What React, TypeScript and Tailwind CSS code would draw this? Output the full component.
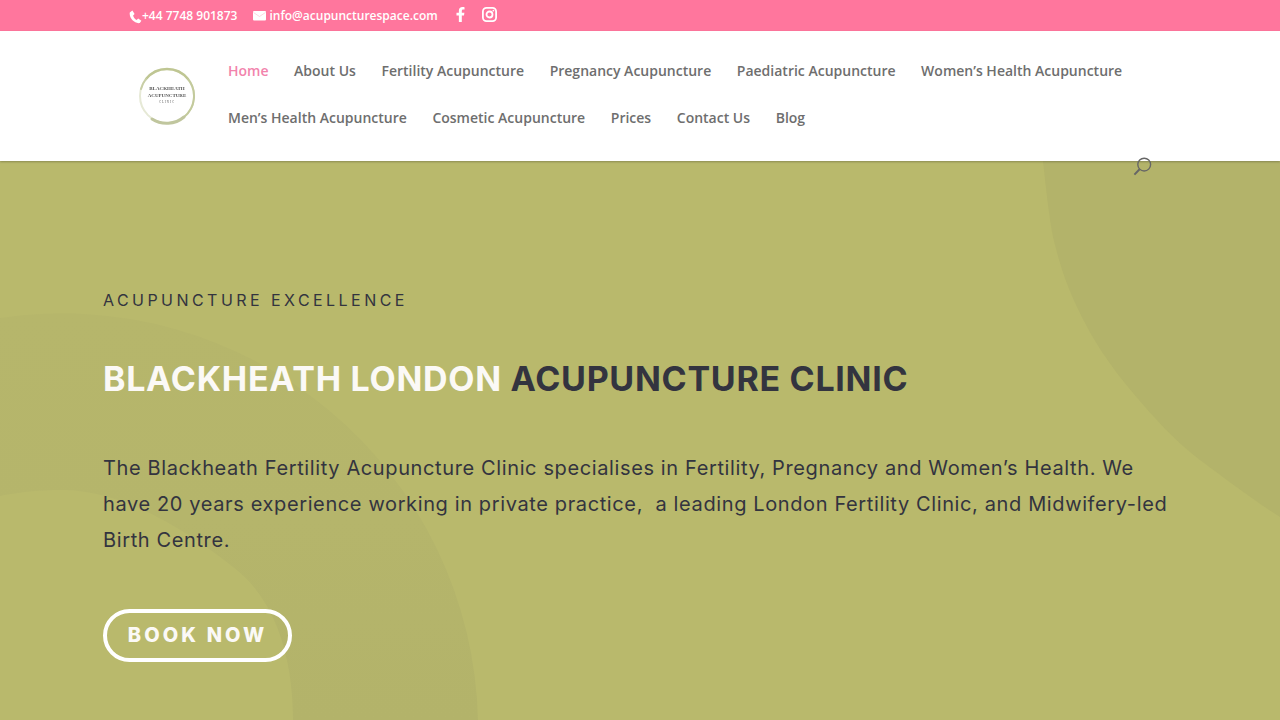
import React from 'react';
import { FaFacebookF } from 'react-icons/fa';

const navItems = [
  'Home',
  'About Us',
  'Fertility Acupuncture',
  'Pregnancy Acupuncture',
  'Paediatric Acupuncture',
  'Women’s Health Acupuncture',
  'Men’s Health Acupuncture',
  'Cosmetic Acupuncture',
  'Prices',
  'Contact Us',
  'Blog',
];

const PhoneIcon = () => (
  <svg className="w-[13px] h-[14px] mt-[2px] shrink-0" viewBox="0 0 13 14" fill="white">
    <path d="M0.8 2.6 L3.4 0.6 L5.6 4 L4.1 5.6 C4.6 7.6 6 9.2 7.6 10 L9.2 8.4 L12.4 10.8 L10.8 13 C6 14.2 -0.2 8.2 0.8 2.6 Z" />
  </svg>
);

const MailIcon = () => (
  <svg className="w-[13px] h-[10px] ml-[16px] shrink-0" viewBox="0 0 13 10">
    <rect width="13" height="9.5" rx="1" fill="white" />
    <path d="M0.5 1.5 L6.5 5.5 L12.5 1.5" fill="none" stroke="#ffc4d6" strokeWidth="0.7" />
  </svg>
);

const InstagramIcon = () => (
  <svg className="w-[15px] h-[15px] ml-[14px] -mt-[3px] shrink-0" viewBox="0 0 15 15" fill="none" stroke="white" strokeWidth="1.8">
    <rect x="0.9" y="0.9" width="13.2" height="13.2" rx="3.6" />
    <circle cx="7.5" cy="7.5" r="3" />
    <circle cx="11.4" cy="3.6" r="0.9" fill="white" stroke="none" />
  </svg>
);

const TopBar = () => (
  <div className="h-[31px] bg-[#ff769d] pl-[129px] flex items-center text-white text-[12px] font-semibold font-['Open_Sans',sans-serif]">
    <PhoneIcon />
    <span className="mt-[1px]">+44 7748 901873</span>
    <MailIcon />
    <span className="ml-[3px] mt-[1px]">info@acupuncturespace.com</span>
    <FaFacebookF className="h-[15px] w-[15px] ml-[15px] -mt-[3px]" />
    <InstagramIcon />
  </div>
);

const Logo = () => (
  <div className="relative w-[58px] h-[58px] blur-[0.4px]">
    <svg className="absolute inset-0 w-full h-full" viewBox="0 0 58 58" fill="none" strokeLinecap="round">
      <circle cx="29" cy="29" r="27" stroke="#e6e9d6" strokeWidth="2" />
      <path d="M8 12 A27 27 0 0 1 50 12" stroke="#bfc693" strokeWidth="2.5" />
      <path d="M50 12 A27 27 0 0 1 46 50" stroke="#c3ca9c" strokeWidth="2" />
      <path d="M46 50 A27 27 0 0 1 14 52" stroke="#c0c69e" strokeWidth="3" />
      <path d="M3 22 A27 27 0 0 1 8 12" stroke="#c8cea6" strokeWidth="2" />
    </svg>
    <div className="relative h-full flex flex-col items-center justify-center text-[#555] font-['Liberation_Serif',serif] font-bold text-[5px] leading-[6.5px]">
      <span>BLACKHEATH</span>
      <span>ACUPUNCTURE</span>
      <span className="font-normal tracking-[1px] text-[3px]">CLINIC</span>
    </div>
  </div>
);

const Header = () => (
  <header className="relative z-10 h-[130px] bg-white shadow-[0_1px_2px_rgba(0,0,0,0.25)] flex pl-[138px]">
    <div className="w-[90px] pt-[36px]">
      <Logo />
    </div>
    <nav className="w-[930px] pt-[16px] flex flex-wrap content-start gap-x-[25.6px] text-[14px] leading-[47px] font-semibold text-[#6e6e6e] font-['Open_Sans',sans-serif]">
      {navItems.map((item) => (
        <a key={item} className={item === 'Home' ? 'text-[#f283ac]' : ''}>{item}</a>
      ))}
    </nav>
    <svg className="absolute left-[1133px] top-[126px] w-[19px] h-[19px]" viewBox="0 0 19 19" fill="none" stroke="#666" strokeWidth="1.4">
      <circle cx="11.2" cy="7.6" r="6.4" />
      <path d="M6.6 12.2 L1.4 17.6" strokeWidth="2" />
    </svg>
  </header>
);

const HeroShapes = () => (
  <svg className="absolute inset-0 w-full h-full" viewBox="0 0 1280 559" fill="none">
    <defs>
      <linearGradient id="band" x1="0" y1="0" x2="0" y2="1">
        <stop offset="0" stopColor="#b6b66b" />
        <stop offset="0.5" stopColor="#b5b56b" />
        <stop offset="1" stopColor="#b3b36a" />
      </linearGradient>
    </defs>
    <path
      d="M0 157 A416 416 0 0 1 478 559 L293 559 C293 490 272 435 233 406 C190 372 125 329 62 329 C40 329 20 331 0 335 Z"
      fill="url(#band)"
    />
    <path
      d="M1043 0 C1046 28 1049 55 1053 76 C1060 105 1067 125 1077 146 C1092 178 1110 205 1133 232 C1155 258 1175 280 1200 299 C1228 320 1255 340 1280 356 L1280 0 Z"
      fill="#b3b36a"
    />
  </svg>
);

const Hero = () => (
  <section className="relative h-[559px] overflow-hidden bg-[#b9b96c] pl-[103px] pt-[130px] font-['Inter',sans-serif] text-[#33343f]">
    <HeroShapes />
    <div className="relative">
      <p className="text-[16px] leading-[18px] font-normal tracking-[3.45px]">ACUPUNCTURE EXCELLENCE</p>
      <h1 className="mt-[49px] text-[34px] leading-[42px] font-bold tracking-[0.7px] whitespace-nowrap">
        <span className="text-[#fbf9f6]">BLACKHEATH LONDON</span> ACUPUNCTURE CLINIC
      </h1>
      <p className="mt-[50px] w-[1072px] text-[20px] leading-[36px] font-normal tracking-[0.62px]">
        The Blackheath Fertility Acupuncture Clinic specialises in Fertility, Pregnancy and Women’s Health. We have 20 years experience working in private practice,&nbsp; a leading London Fertility Clinic, and Midwifery-led Birth Centre.
      </p>
      <a className="mt-[51px] inline-flex h-[53px] w-[189px] pb-[1px] items-center justify-center rounded-full border-4 border-white text-[20px] font-extrabold tracking-[3.1px] text-[#fbf9f6]">
        BOOK NOW
      </a>
    </div>
  </section>
);

export default function App() {
  return (
    <div className="w-[1280px] h-[720px] overflow-hidden">
      <TopBar />
      <Header />
      <Hero />
    </div>
  );
}
